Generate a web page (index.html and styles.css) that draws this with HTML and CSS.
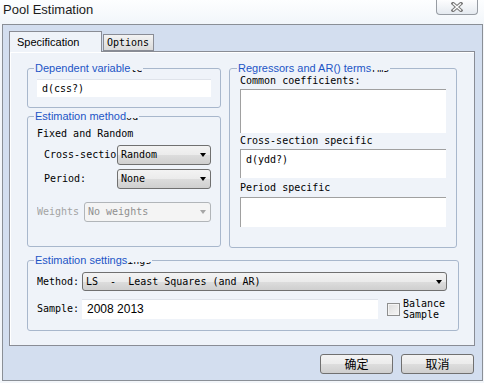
FILE: index.html
```html
<!DOCTYPE html>
<html lang="en">
<head>
  <meta charset="UTF-8">
  <title>Pool Estimation</title>
  <link rel="stylesheet" href="styles.css">
</head>
<body>

<div class="window">
  <div class="titlebar">
    <span class="title">Pool Estimation</span>
    <span class="close">
      <svg width="12" height="10" viewBox="0 0 12 10">
        <path d="M2 1.5 L10 8.5 M10 1.5 L2 8.5" stroke="#7a7a7a" stroke-width="3.4" stroke-linecap="square"/>
        <path d="M2 1.5 L10 8.5 M10 1.5 L2 8.5" stroke="#fff" stroke-width="1.3"/>
      </svg>
    </span>
  </div>

  <div class="frame">
    <div class="tabs">
      <span class="tab active">Specification</span>
      <span class="tab opt">Options</span>
    </div>

    <div class="panel">
      <div class="cols">
        <div class="left">
          <fieldset class="grp dep">
            <legend>Dependent variable<span class="tail"><span>le</span></span></legend>
            <div class="field single">d(css?)</div>
          </fieldset>

          <fieldset class="grp method">
            <legend>Estimation method<span class="tail"><span>od</span></span></legend>
            <div class="mono fixed">Fixed and Random</div>
            <div class="row first">
              <span class="mono lbl cross">Cross-sectio</span>
              <span class="combo"><span class="mono">Random</span><i class="arrow"></i></span>
            </div>
            <div class="row">
              <span class="mono lbl cross">Period:</span>
              <span class="combo"><span class="mono">None</span><i class="arrow"></i></span>
            </div>
            <div class="row weights">
              <span class="mono lbl off">Weights</span>
              <span class="combo wide disabled"><span class="mono">No weights</span><i class="arrow"></i></span>
            </div>
          </fieldset>
        </div>

        <fieldset class="grp regs">
          <legend>Regressors and AR() terms<span class="tail"><span>rms</span></span></legend>
          <div class="mono cap">Common coefficients:</div>
          <div class="field box common"></div>
          <div class="mono cap">Cross-section specific</div>
          <div class="field box cross-box mono">d(ydd?)</div>
          <div class="mono cap period">Period specific</div>
          <div class="field box period-box"></div>
        </fieldset>
      </div>

      <fieldset class="grp settings">
        <legend>Estimation settings<span class="tail"><span>ings</span></span></legend>
        <div class="row first">
          <span class="mono lbl short">Method:</span>
          <span class="combo long"><span class="mono">LS  -  Least Squares (and AR)</span><i class="arrow"></i></span>
        </div>
        <div class="row sample">
          <span class="mono lbl short">Sample:</span>
          <div class="field sample-box">2008 2013</div>
          <span class="check"></span>
          <span class="mono balance">Balance<br>Sample</span>
        </div>
      </fieldset>
    </div>

    <div class="buttons">
      <button class="btn">确定</button>
      <button class="btn">取消</button>
    </div>
  </div>
</div>

</body>
</html>
```

FILE: styles.css
```css
* {
  box-sizing: border-box;
}
body {
  margin: 0;
  font-family: "Liberation Sans", Arial, sans-serif;
  background: #fff;
}
.window {
  width: 484px;
  height: 383px;
  background: #f3f6fa;
  overflow: hidden;
}
.titlebar {
  height: 24px;
  display: flex;
  justify-content: space-between;
  align-items: flex-start;
  padding: 0 6px 0 3px;
  background: linear-gradient(#fdfeff, #f2f6fa);
}
.title {
  font-size: 13px;
  line-height: 20px;
  color: #1b1b1b;
}
.close {
  width: 42px;
  height: 15px;
  border: 1px solid #979ca3;
  border-top: none;
  border-radius: 0 0 4px 4px;
  background: linear-gradient(#fdfdfe, #e5eaf0);
  display: flex;
  justify-content: center;
  align-items: center;
}
.mono {
  font-family: "DejaVu Sans Mono", "Liberation Mono", monospace;
  font-size: 10px;
  line-height: 12px;
  color: #000;
  white-space: pre;
}

/* window frame */
.frame {
  margin-left: 2px;
  width: 481px;
  height: 357px;
  border: 1px solid #8a8f96;
  background: #d3deef;
  padding: 6px 6px 0 6px;
}
.tabs {
  display: flex;
  align-items: flex-end;
  height: 20px;
}
.tab {
  border: 1px solid #898c95;
}
.tab.active {
  width: 93px;
  height: 21px;
  margin-bottom: -1px;
  border-bottom: none;
  background: #eff3f9;
  position: relative;
  z-index: 1;
  padding-left: 7px;
  font-size: 11px;
  line-height: 20px;
  color: #000;
}
.tab.opt {
  width: 51px;
  height: 17px;
  margin-left: 1px;
  background: linear-gradient(#f3f3f3, #dadada);
  padding-left: 3px;
  font-family: "DejaVu Sans Mono", monospace;
  font-size: 10px;
  line-height: 15px;
}
.panel {
  width: 466px;
  height: 295px;
  border: 1px solid #898c95;
  background: #eff3f9;
  padding: 10px 0 0 17px;
  box-shadow: inset 1px 1px #fff;
}
.cols {
  display: grid;
  grid-template-columns: 194px 228px;
  column-gap: 8px;
  align-items: start;
}
.left {
  display: flex;
  flex-direction: column;
  gap: 2px;
}

/* group boxes */
.grp {
  margin: 0;
  padding: 0 9px 10px;
  border: 1px solid #a8b7cc;
  border-radius: 3px;
  min-width: 0;
}
.grp legend {
  margin-left: -3px;
  padding: 0 1px;
  font-size: 11px;
  line-height: 13px;
  color: #1d55c6;
  white-space: nowrap;
}
.tail {
  display: inline-block;
  height: 5px;
  overflow: hidden;
  vertical-align: -2.5px;
  font-family: "DejaVu Sans Mono", monospace;
  font-size: 10px;
  line-height: 10px;
  color: #000;
}
.tail span {
  display: block;
  margin-top: -6px;
}
.field {
  background: #fff;
}
.field.single {
  margin-top: 4px;
  height: 18px;
  border-top: 1px solid #dfe3ea;
  padding-left: 5px;
  font-family: "DejaVu Sans Mono", monospace;
  font-size: 10px;
  line-height: 17px;
}

.method {
  padding-bottom: 24px;
}
.fixed {
  margin-top: 5px;
}
.row {
  display: flex;
  align-items: center;
  margin-top: 4px;
}
.row.first {
  margin-top: 5px;
}
.row.weights {
  margin-top: 13px;
}
.lbl {
  overflow: hidden;
}
.lbl.cross {
  width: 80px;
  padding-left: 7px;
}
.lbl.off {
  width: 47px;
  color: #a3a3a3;
}
.lbl.short {
  width: 45px;
}
.combo {
  display: flex;
  align-items: center;
  width: 94px;
  height: 20px;
  padding-left: 3px;
  border: 1px solid #707070;
  border-radius: 3px;
  background: linear-gradient(#f3f3f3, #ebebeb 50%, #dddddd 50%, #cfcfcf);
}
.combo.wide {
  width: 127px;
}
.combo.long {
  width: 365px;
  height: 19px;
}
.combo.disabled {
  border-color: #b1b5b9;
  background: #f4f4f4;
}
.combo.disabled .mono {
  color: #8f8f8f;
}
.arrow {
  margin-left: auto;
  margin-right: 4px;
  border-left: 3.5px solid transparent;
  border-right: 3.5px solid transparent;
  border-top: 4px solid #000;
}
.disabled .arrow {
  border-top-color: #a6a6a6;
}

.regs {
  padding: 0 10px 20px;
}
.cap {
  margin-top: 2px;
}
.regs .cap:first-of-type {
  margin-top: 0;
}
.cap.period {
  margin-top: 4px;
}
.field.box {
  margin-top: 2px;
  border-top: 1px solid #a0a0a0;
  border-left: 1px solid #a0a0a0;
}
.common {
  height: 44px;
}
.cross-box {
  height: 29px;
  padding: 4px 5px;
}
.period-box {
  margin-top: 3px !important;
  height: 30px;
}

.settings {
  width: 432px;
  margin-top: 6px;
}
.row.sample {
  margin-top: 7px;
}
.sample-box {
  width: 296px;
  height: 20px;
  border-top: 1px solid #dfe3ea;
  padding-left: 5px;
  font-size: 12px;
  line-height: 19px;
  color: #000;
}
.check {
  width: 13px;
  height: 13px;
  margin-left: 9px;
  border: 1px solid #8e8f8f;
  background: linear-gradient(135deg, #dcdcdc, #f6f6f6);
  box-shadow: inset 0 0 0 1px #f4f4f4;
}
.balance {
  margin-left: 3px;
  line-height: 11px;
}

.buttons {
  display: flex;
  justify-content: flex-end;
  gap: 8px;
  width: 466px;
  padding-right: 1px;
  margin-top: 8px;
}
.btn {
  width: 73px;
  height: 20px;
  padding: 0;
  border: 1px solid #707070;
  border-radius: 3px;
  background: linear-gradient(#f3f3f3, #ebebeb 50%, #dddddd 50%, #cfcfcf);
  font-family: "Noto Sans CJK SC", sans-serif;
  font-size: 12px;
  line-height: 18px;
  color: #000;
}
```
